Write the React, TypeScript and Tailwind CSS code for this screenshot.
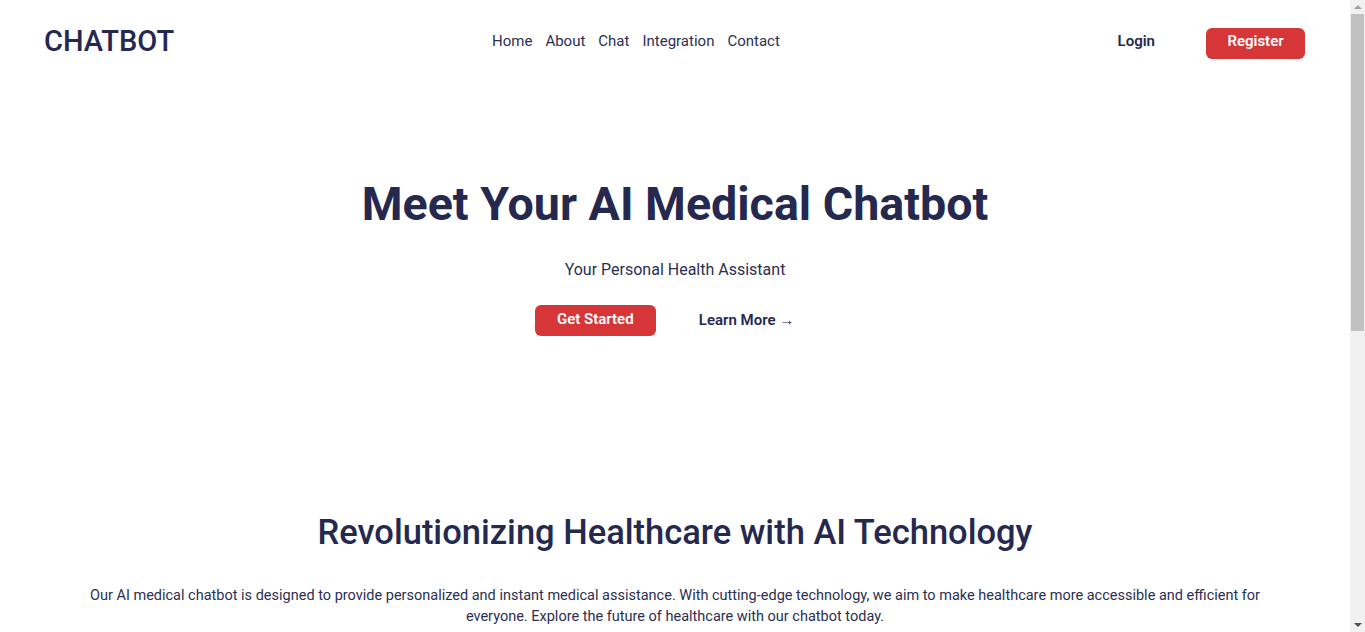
import React from "react";

const links = ["Home", "About", "Chat", "Integration", "Contact"];

function Scrollbar() {
  return (
    <div className="flex w-[15px] shrink-0 flex-col items-center bg-[#f1f1f1]">
      <div className="flex h-[14px] items-center justify-center">
        <div className="h-0 w-0 border-x-[4px] border-b-[4px] border-x-transparent border-b-[#a3a3a3]" />
      </div>
      <div className="h-[317px] w-[13px] bg-[#c1c1c1]" />
      <div className="flex-1" />
      <div className="flex h-[14px] items-center justify-center">
        <div className="h-0 w-0 border-x-[4px] border-t-[4px] border-x-transparent border-t-[#505050]" />
      </div>
    </div>
  );
}

export default function App() {
  return (
    <div className="flex h-screen overflow-hidden bg-white text-[#262a4f] font-['Roboto',sans-serif]">
      <div className="min-w-0 flex-1">
        <header className="flex h-[83px] items-center pl-11 pr-[45px]">
          <div className="w-[448px] text-[29px] font-medium text-[#25284f]">CHATBOT</div>
          <nav className="flex gap-[13px] text-[15px] text-[#2c2f52]">
            {links.map((l) => (
              <a key={l} href="#" className="hover:text-[#d63638]">
                {l}
              </a>
            ))}
          </nav>
          <div className="flex flex-1 items-center justify-end gap-[51px] pt-[3px]">
            <a href="#" className="-mt-[3px] text-[15px] font-semibold text-[#25284f]">
              Login
            </a>
            <button className="h-[31px] w-[99px] rounded-md bg-[#d63638] pb-[3px] text-[15px] font-semibold text-white">
              Register
            </button>
          </div>
        </header>

        <section className="flex flex-col items-center pt-[98px]">
          <h1 className="text-[46.6px] font-bold leading-none text-[#25284f]">Meet Your AI Medical Chatbot</h1>
          <p className="mt-[30px] text-[16px] text-[#2c2f52]">Your Personal Health Assistant</p>
          <div className="mt-[23px] flex items-center gap-5">
            <button className="h-[31px] w-[121px] rounded-md bg-[#d63638] pb-[2px] text-[15px] font-semibold text-white">
              Get Started
            </button>
            <a href="#" className="pl-[23px] pr-[21px] text-[15px] font-semibold text-[#25284f]">
              Learn More →
            </a>
          </div>
        </section>

        <section className="mt-[175px] flex flex-col items-center px-[88px] text-center">
          <h2 className="text-[34.5px] font-medium leading-tight text-[#25284f]">
            Revolutionizing Healthcare with AI Technology
          </h2>
          <p className="mt-[31px] text-[14.5px] leading-[21px] text-[#2c2f52]">
            Our AI medical chatbot is designed to provide personalized and instant medical assistance. With cutting-edge
            technology, we aim to make healthcare more accessible and efficient for everyone. Explore the future of
            healthcare with our chatbot today.
          </p>
        </section>
      </div>
      <Scrollbar />
    </div>
  );
}
